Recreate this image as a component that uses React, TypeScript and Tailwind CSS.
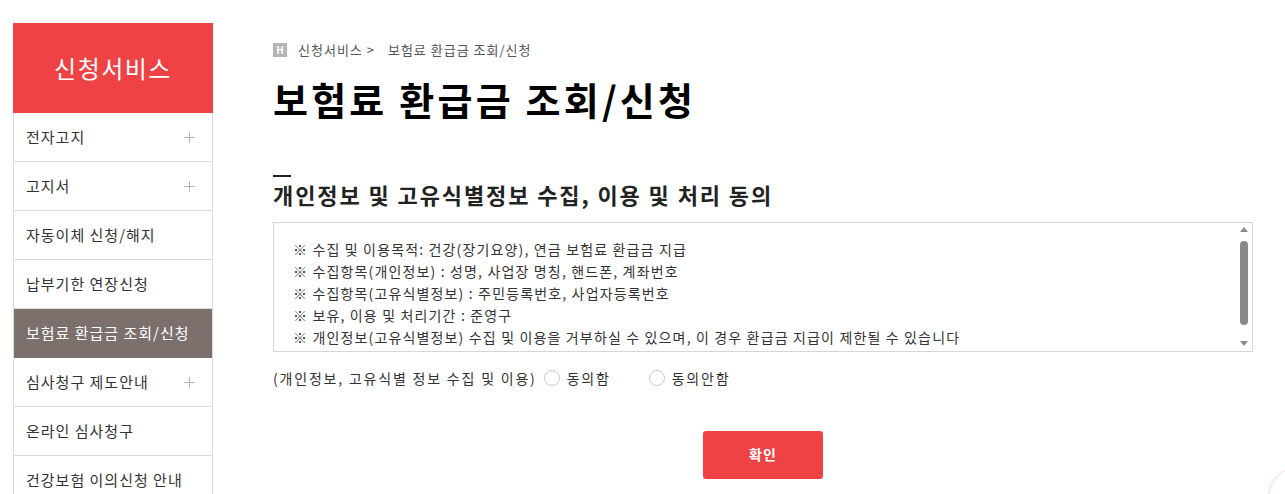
import { Plus } from 'lucide-react';

const menu = [
  { label: '전자고지', plus: true },
  { label: '고지서', plus: true },
  { label: '자동이체 신청/해지' },
  { label: '납부기한 연장신청' },
  { label: '보험료 환급금 조회/신청', active: true },
  { label: '심사청구 제도안내', plus: true },
  { label: '온라인 심사청구' },
  { label: '건강보험 이의신청 안내' },
];

const lines = [
  '※ 수집 및 이용목적: 건강(장기요양), 연금 보험료 환급금 지급',
  '※ 수집항목(개인정보) : 성명, 사업장 명칭, 핸드폰, 계좌번호',
  '※ 수집항목(고유식별정보) : 주민등록번호, 사업자등록번호',
  '※ 보유, 이용 및 처리기간 : 준영구',
  '※ 개인정보(고유식별정보) 수집 및 이용을 거부하실 수 있으며, 이 경우 환급금 지급이 제한될 수 있습니다',
];

const Radio = ({ label }: { label: string }) => (
  <label className="flex items-center gap-[7px]">
    <span className="h-[16px] w-[16px] rounded-full border border-[#c8c8c8] bg-white" />
    <span>{label}</span>
  </label>
);

export default function App() {
  return (
    <div
      className="relative flex h-[494px] w-[1285px] overflow-hidden bg-white text-[#222]"
      style={{ fontFamily: '"Noto Sans CJK KR", "Noto Sans", sans-serif' }}
    >
      <aside className="ml-[13px] mt-[23px] w-[200px] shrink-0">
        <div className="flex h-[90px] items-center justify-center bg-[#ef4244] text-[24px] tracking-[1.5px] text-white">
          신청서비스
        </div>
        <ul className="border-x border-[#dcdcdc]">
          {menu.map((item) => (
            <li
              key={item.label}
              className={
                item.active
                  ? 'flex h-[49px] items-center justify-between bg-[#7b706c] pl-[12px] pr-[14px] text-[15px] tracking-[1px] text-white'
                  : 'flex h-[49px] items-center justify-between border-b border-[#dcdcdc] pl-[12px] pr-[14px] text-[15px] tracking-[1px] text-[#333]'
              }
            >
              <span>{item.label}</span>
              {item.plus && <Plus className="h-[17px] w-[17px] text-[#999]" strokeWidth={1} />}
            </li>
          ))}
        </ul>
      </aside>

      <main className="ml-[60px] w-[980px] pt-[40px]">
        <div className="flex items-center text-[13px] tracking-[1px] text-[#555]">
          <span className="mr-[11px] flex h-[14px] w-[14px] items-center justify-center bg-[#b4b4b4] text-[10px] font-bold leading-none tracking-normal text-white">
            H
          </span>
          <span>신청서비스 &gt;</span>
          <span className="ml-[13px]">보험료 환급금 조회/신청</span>
        </div>
        <h1 className="mt-[14px] text-[38px] font-bold leading-[50px] tracking-[3.2px] text-black">보험료 환급금 조회/신청</h1>

        <div className="mt-[51px] h-[2px] w-[18px] bg-[#222]" />
        <h2 className="mt-[1px] text-[22px] font-bold leading-[32px] tracking-[1.9px] text-[#222]">
          개인정보 및 고유식별정보 수집, 이용 및 처리 동의
        </h2>

        <div className="mt-[12px] flex h-[130px] border border-[#d6d6d6]">
          <div className="flex-1 pl-[19px] pt-[15px] text-[14px] leading-[22px] tracking-[1.15px] text-[#333]">
            {lines.map((l) => (
              <p key={l}>{l}</p>
            ))}
          </div>
          <div className="mr-[1px] flex w-[14px] flex-col items-center pb-[5px] pt-[4px]">
            <span className="h-0 w-0 border-x-[4px] border-b-[5px] border-x-transparent border-b-[#8a8a8a]" />
            <span className="mt-[9px] h-[84px] w-[8px] rounded-full bg-[#8a8a8a]" />
            <span className="flex-1" />
            <span className="h-0 w-0 border-x-[4px] border-t-[5px] border-x-transparent border-t-[#8a8a8a]" />
          </div>
        </div>

        <div className="mt-[16px] flex items-center text-[14px] tracking-[1.8px] text-[#333]">
          <span className="mr-[7px]">(개인정보, 고유식별 정보 수집 및 이용)</span>
          <Radio label="동의함" />
          <span className="w-[38px]" />
          <Radio label="동의안함" />
        </div>

        <div className="mt-[42px] flex justify-center">
          <button className="h-[48px] w-[120px] rounded-[3px] bg-[#ef4244] text-[14px] font-bold tracking-[1px] text-white">
            확인
          </button>
        </div>
      </main>

      <div className="absolute left-[1268px] top-[467px] h-[60px] w-[60px] rounded-full border border-[#f3d6d8] bg-white" />
    </div>
  );
}
